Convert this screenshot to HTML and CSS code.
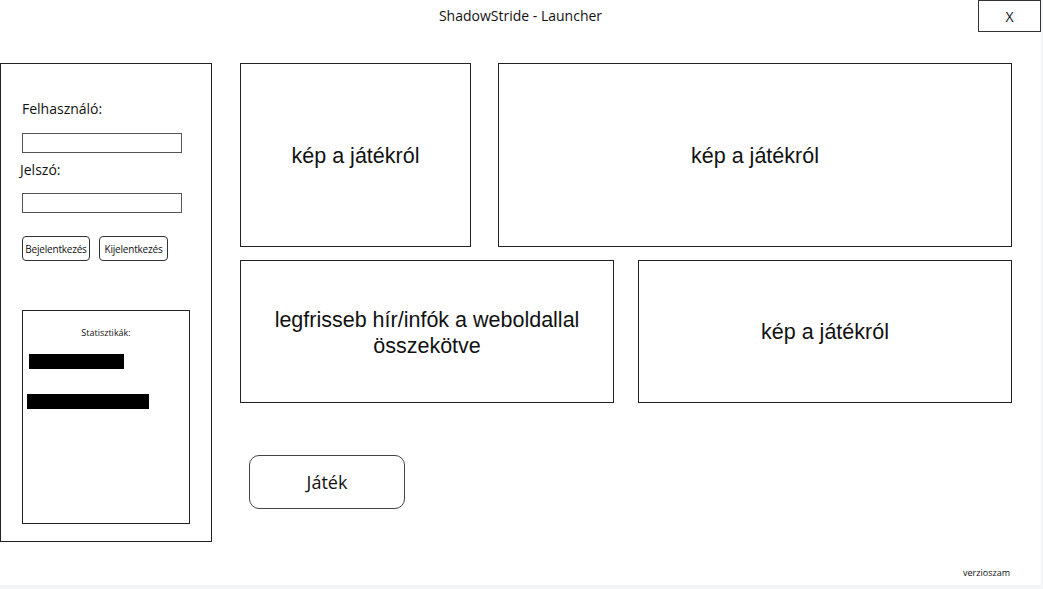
FILE: index.html
```html
<!DOCTYPE html>
<html lang="hu">
<head>
<meta charset="utf-8">
<title>ShadowStride - Launcher</title>
<link rel="stylesheet" href="styles.css">
</head>
<body>
<div class="window">
  <header class="titlebar">
    <div class="title">ShadowStride - Launcher</div>
    <button class="close">X</button>
  </header>
  <main class="main">
    <aside class="side">
      <label class="lbl lbl-user">Felhasználó:</label>
      <div class="input"></div>
      <label class="lbl lbl-pass">Jelszó:</label>
      <div class="input"></div>
      <div class="btns">
        <button class="sbtn">Bejelentkezés</button>
        <button class="sbtn">Kijelentkezés</button>
      </div>
      <section class="stats">
        <div class="stats-title">Statisztikák:</div>
        <div class="bar bar1"></div>
        <div class="bar bar2"></div>
      </section>
    </aside>
    <div class="content">
      <div class="row row1">
        <div class="box b1">kép a játékról</div>
        <div class="box b2">kép a játékról</div>
      </div>
      <div class="row row2">
        <div class="box b3">legfrisseb hír/infók a weboldallal<br>összekötve</div>
        <div class="box b4">kép a játékról</div>
      </div>
      <button class="play">Játék</button>
    </div>
  </main>
  <footer class="footer">verzioszam</footer>
</div>
</body>
</html>
```
FILE: styles.css
```css
* { box-sizing: border-box; }
html, body { margin: 0; padding: 0; }
body {
  background: #f4f5f7;
  width: 1043px;
  height: 589px;
  overflow: hidden;
  font-family: "Open Sans", "Noto Sans", sans-serif;
  color: #111;
}
.window {
  width: 1041px;
  height: 585px;
  background: #fff;
  display: flex;
  flex-direction: column;
}
.titlebar {
  height: 63px;
  display: flex;
  align-items: flex-start;
  justify-content: center;
  position: relative;
}
.title {
  font-size: 14px;
  line-height: 18px;
  margin-top: 7px;
}
.close {
  position: absolute;
  right: 0;
  top: 0;
  width: 63px;
  height: 32px;
  border: 1px solid #333;
  background: #fff;
  font-family: "Open Sans", sans-serif;
  font-size: 14px;
  color: #111;
  padding: 0;
}
.main {
  display: flex;
  gap: 28px;
}
.side {
  width: 212px;
  height: 479px;
  border: 1px solid #222;
  padding: 35px 0 0 21px;
  display: flex;
  flex-direction: column;
  align-items: flex-start;
}
.lbl {
  font-size: 14px;
  line-height: 20px;
}
.lbl-pass { margin-left: -2px; margin-top: 7px; }
.input {
  width: 160px;
  height: 20px;
  border: 1px solid #555;
  margin-top: 13px;
}
.lbl-user + .input { margin-top: 14px; }
.btns {
  display: flex;
  gap: 9px;
  margin-top: 23px;
}
.sbtn {
  height: 25px;
  border: 1px solid #333;
  border-radius: 4px;
  background: #fff;
  font-family: "Open Sans", sans-serif;
  font-size: 10px;
  letter-spacing: -0.2px;
  padding: 0;
  color: #111;
}
.sbtn:first-child { width: 68px; }
.sbtn:last-child { width: 69px; }
.stats {
  width: 168px;
  height: 214px;
  border: 1px solid #222;
  margin-top: 49px;
  display: flex;
  flex-direction: column;
  align-items: flex-start;
}
.stats-title {
  align-self: center;
  font-size: 9px;
  line-height: 12px;
  margin-top: 16px;
}
.bar { background: #000; height: 15px; }
.bar1 { width: 95px; margin: 15px 0 0 6px; }
.bar2 { width: 122px; margin: 25px 0 0 4px; }
.content {
  display: flex;
  flex-direction: column;
  align-items: flex-start;
}
.row { display: flex; }
.row1 { gap: 27px; height: 184px; }
.row2 { gap: 24px; height: 143px; margin-top: 13px; }
.box {
  border: 1px solid #222;
  display: flex;
  align-items: center;
  justify-content: center;
  text-align: center;
  font-family: "Liberation Sans", Arial, sans-serif;
  font-size: 21.5px;
  line-height: 26px;
  color: #111;
}
.b1 { width: 231px; padding-top: 2px; }
.b2 { width: 514px; padding-top: 2px; }
.b3 { width: 374px; padding-top: 2px; }
.b4 { width: 374px; }
.play {
  margin: 52px 0 0 9px;
  width: 156px;
  height: 54px;
  border: 1px solid #444;
  border-radius: 10px;
  background: #fff;
  font-family: "Open Sans", sans-serif;
  font-size: 18px;
  color: #111;
}
.footer {
  margin-top: auto;
  align-self: flex-end;
  font-size: 9px;
  line-height: 12px;
  padding: 0 31px 6px 0;
}
```
